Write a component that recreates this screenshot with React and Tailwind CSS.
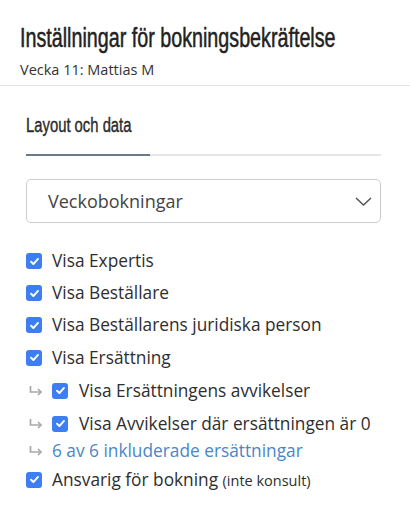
import React from 'react';

const body = { fontFamily: '"Open Sans", "Noto Sans", sans-serif' };
const narrow = { fontFamily: '"Liberation Sans", Arial, sans-serif' };

function Check() {
  return (
    <span className="flex h-4 w-4 shrink-0 items-center justify-center rounded-[3px] bg-[#3d7ff3]">
      <svg width="11" height="11" viewBox="0 0 12 12" fill="none">
        <path d="M2.2 6.3 L4.8 8.8 L9.8 3.2" stroke="white" strokeWidth="2.1" strokeLinecap="round" strokeLinejoin="round" />
      </svg>
    </span>
  );
}

function Arrow() {
  return (
    <svg width="14" height="10" viewBox="0 0 14 10" className="shrink-0">
      <path d="M1.5 0 V6 H11" stroke="#a8a8a8" strokeWidth="1.7" fill="none" />
      <path d="M9 3 L12 6 L9 9" stroke="#a8a8a8" strokeWidth="1.7" fill="none" />
    </svg>
  );
}

export default function App() {
  // rows: label + height so the checkbox centres land where the screenshot has them
  const main = [
    ['Visa Expertis', 'h-[32px]'],
    ['Visa Beställare', 'h-[32px]'],
    ['Visa Beställarens juridiska person', 'h-[32px]'],
    ['Visa Ersättning', 'h-[33px]'],
  ];
  const sub = ['Visa Ersättningens avvikelser', 'Visa Avvikelser där ersättningen är 0'];

  return (
    <div className="h-[518px] w-[410px] overflow-hidden bg-white text-[#333]" style={body}>
      <div className="px-5 pt-[22px] pb-[5px]">
        <h1
          className="origin-left scale-x-[0.73] whitespace-nowrap text-[27px] leading-[32px] text-[#222] [-webkit-text-stroke:0.5px_#222]"
          style={narrow}
        >
          Inställningar för bokningsbekräftelse
        </h1>
        <p className="mt-[6px] text-[14.5px] leading-[20px] text-[#333]">Vecka 11: Mattias M</p>
      </div>
      <div className="h-px w-full bg-[#e3e3e3]" />

      <div className="px-[26px] pt-[27px]">
        <div className="flex w-[355px] flex-col">
          <div
            className="origin-left scale-x-[0.76] whitespace-nowrap pb-[17px] text-[19.5px] leading-[24px] text-[#2b2b2b] [-webkit-text-stroke:0.4px_#2b2b2b]"
            style={narrow}
          >
            Layout och data
          </div>
          <div className="flex h-[2px]">
            <div className="w-[124px] bg-[#687a8e]" />
            <div className="flex-1 bg-[#e6e6e6]" />
          </div>
        </div>

        <div className="mt-[23px] flex h-[44px] w-[355px] items-center justify-between rounded-[5px] border border-[#cccccc] pl-[21px] pr-[8px]">
          <span className="text-[18px] text-[#444]">Veckobokningar</span>
          <svg width="17" height="9" viewBox="0 0 17 9">
            <path d="M1 1 L8.5 8 L16 1" stroke="#555" strokeWidth="1.5" fill="none" />
          </svg>
        </div>

        <div className="mt-[22px] flex flex-col text-[17.3px] text-[#2e2e2e]">
          {main.map(([t, h]) => (
            <div key={t} className={`flex ${h} items-center gap-[10px]`}>
              <Check />
              <span>{t}</span>
            </div>
          ))}
          {sub.map((t) => (
            <div key={t} className="flex h-[33px] items-center pl-[3px]">
              <Arrow />
              <span className="ml-[9px]"><Check /></span>
              <span className="ml-[11px]">{t}</span>
            </div>
          ))}
          <div className="flex h-[22px] items-center pl-[3px]">
            <Arrow />
            <span className="ml-[9px] text-[#4a86c8]">6 av 6 inkluderade ersättningar</span>
          </div>
          <div className="flex h-[35px] items-center gap-[10px]">
            <Check />
            <span>
              Ansvarig för bokning <span className="text-[14.5px]">(inte konsult)</span>
            </span>
          </div>
        </div>
      </div>
    </div>
  );
}
